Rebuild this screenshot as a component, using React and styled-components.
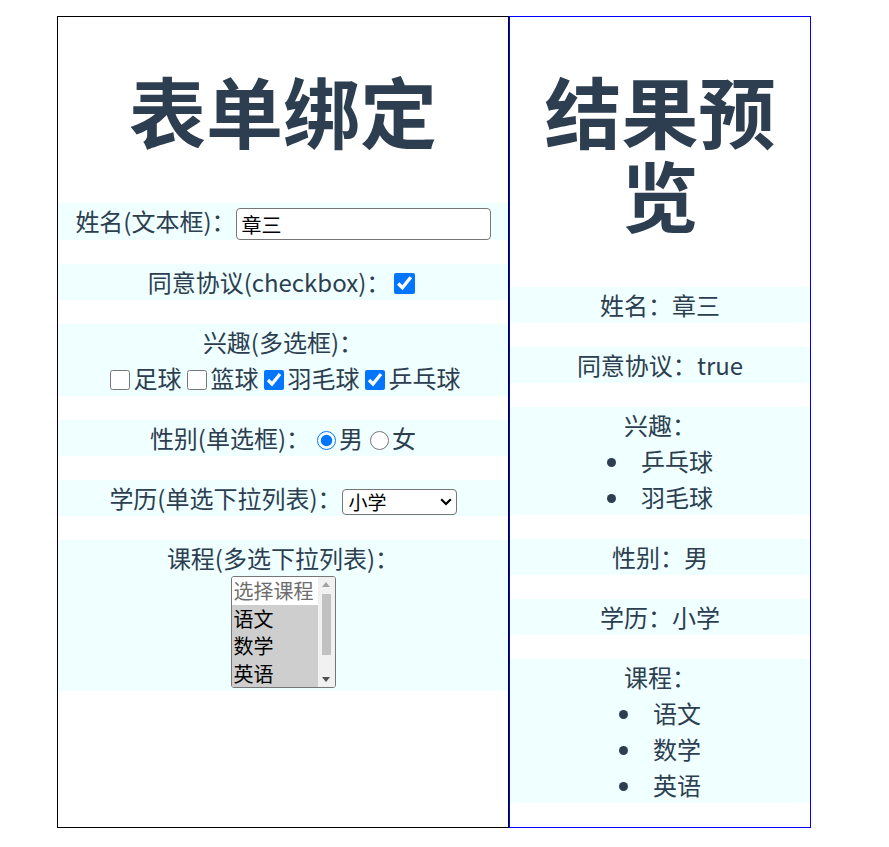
import React, { useState } from "react";
import styled, { createGlobalStyle } from "styled-components";

const GlobalStyle = createGlobalStyle`
  body {
    margin: 0;
    background: #ffffff;
    font-family: "Noto Sans CJK SC", "Noto Sans", sans-serif;
    color: #2c3e50;
  }
`;

const Page = styled.div`
  display: flex;
  align-items: stretch;
  padding: 16px 0 0 57px;
  text-align: center;
`;

const Panel = styled.div`
  box-sizing: border-box;
  width: ${(p) => p.$width}px;
  border: 1px solid ${(p) => p.$border};
`;

const Title = styled.h1`
  margin: 51px 0;
  font-size: 77px;
  line-height: 84px;
  font-weight: 700;
  color: #2c3e50;
`;

const Row = styled.div`
  margin: 24px 0;
  background: #f0ffff;
  font-size: 24px;
  line-height: 36px;
  color: #2c3e50;
`;

const TextInput = styled.input`
  box-sizing: border-box;
  width: 255px;
  height: 32px;
  padding: 1px 5px;
  margin: 0;
  border: 1px solid #767676;
  border-radius: 4px;
  font-family: "Noto Sans CJK SC", sans-serif;
  font-size: 20px;
  color: #000;
  vertical-align: middle;
  outline: none;
`;

const Check = styled.input.attrs({ type: "checkbox" })`
  width: ${(p) => p.$size}px;
  height: ${(p) => p.$size}px;
  margin: 0 ${(p) => p.$right}px 0 ${(p) => p.$left}px;
  vertical-align: -2px;
`;

const Radio = styled.input.attrs({ type: "radio" })`
  width: 19px;
  height: 19px;
  margin: 0 3px 0 7px;
  vertical-align: -2px;
`;

const DropWrap = styled.span`
  position: relative;
  display: inline-block;
  vertical-align: middle;
  line-height: 0;
`;

const Dropdown = styled.select`
  appearance: none;
  box-sizing: border-box;
  width: 115px;
  height: 26px;
  margin: 0;
  padding: 0 0 0 6px;
  border: 1px solid #767676;
  border-radius: 4px;
  background: #fff;
  font-family: "Noto Sans CJK SC", sans-serif;
  font-size: 19px;
  line-height: 24px;
  color: #000;
  outline: none;
`;

const Chevron = styled.svg`
  position: absolute;
  right: 5px;
  top: 9px;
  pointer-events: none;
`;

const ListBox = styled.div`
  display: inline-flex;
  box-sizing: border-box;
  width: 105px;
  height: 112px;
  margin-bottom: 3px;
  border: 1px solid #767676;
  border-radius: 3px;
  background: #fff;
  overflow: hidden;
  vertical-align: top;
  text-align: left;
`;

const Options = styled.div`
  flex: 1;
  display: flex;
  flex-direction: column;
`;

const Option = styled.div`
  height: 27.5px;
  padding: 0 2px;
  font-size: 20px;
  line-height: 27px;
  white-space: nowrap;
  overflow: hidden;
  color: ${(p) => (p.$disabled ? "#6d6d6d" : "#000")};
  background: ${(p) => (p.$selected ? "#cecece" : "#fff")};
  cursor: default;
`;

const ScrollBar = styled.div`
  width: 17px;
  display: flex;
  flex-direction: column;
  align-items: center;
  background: #f1f1f1;
`;

const ScrollButton = styled.div`
  height: 15px;
  width: 100%;
  display: flex;
  align-items: center;
  justify-content: center;
`;

const Track = styled.div`
  flex: 1;
  width: 100%;
  display: flex;
  justify-content: center;
`;

const Thumb = styled.div`
  width: 9px;
  height: 61px;
  margin-top: 2px;
  background: #c1c1c1;
`;

const List = styled.ul`
  margin: 0;
  padding: 0;
  list-style-position: inside;
`;

const courses = ["语文", "数学", "英语"];
const hobbyList = ["足球", "篮球", "羽毛球", "乒乓球"];

export default function App() {
  const [name, setName] = useState("章三");
  const [agree, setAgree] = useState(true);
  const [hobbies, setHobbies] = useState(["乒乓球", "羽毛球"]);
  const [gender, setGender] = useState("男");
  const [edu, setEdu] = useState("小学");
  const [picked, setPicked] = useState(courses);

  const toggleHobby = (h) =>
    setHobbies((list) => (list.includes(h) ? list.filter((x) => x !== h) : [...list, h]));

  const toggleCourse = (c) =>
    setPicked((list) => (list.includes(c) ? list.filter((x) => x !== c) : courses.filter((x) => x === c || list.includes(x))));

  return (
    <>
      <GlobalStyle />
      <Page>
        <Panel $width={452} $border="#000">
          <Title>表单绑定</Title>
          <Row>
            姓名(文本框)：
            <TextInput value={name} onChange={(e) => setName(e.target.value)} />
          </Row>
          <Row>
            同意协议(checkbox)：
            <Check $size={21} $left={4} $right={3} checked={agree} onChange={(e) => setAgree(e.target.checked)} />
          </Row>
          <Row>
            兴趣(多选框)：
            <br />
            {hobbyList.map((h, i) => (
              <React.Fragment key={h}>
                <Check
                  $size={20}
                  $left={i === 0 ? 4 : 5}
                  $right={4}
                  checked={hobbies.includes(h)}
                  onChange={() => toggleHobby(h)}
                />
                {h}
              </React.Fragment>
            ))}
          </Row>
          <Row>
            性别(单选框)：
            <Radio name="gender" checked={gender === "男"} onChange={() => setGender("男")} />男
            <Radio name="gender" checked={gender === "女"} onChange={() => setGender("女")} />女
          </Row>
          <Row>
            学历(单选下拉列表)：
            <DropWrap>
              <Dropdown value={edu} onChange={(e) => setEdu(e.target.value)}>
                <option>小学</option>
                <option>初中</option>
                <option>高中</option>
                <option>大学</option>
              </Dropdown>
              <Chevron width="12" height="8" viewBox="0 0 12 8">
                <path d="M1.2 1.2 L6 6 L10.8 1.2" fill="none" stroke="#000" strokeWidth="2.2" />
              </Chevron>
            </DropWrap>
          </Row>
          <Row>
            课程(多选下拉列表)：
            <br />
            <ListBox>
              <Options>
                <Option $disabled>选择课程</Option>
                {courses.map((c) => (
                  <Option key={c} $selected={picked.includes(c)} onClick={() => toggleCourse(c)}>
                    {c}
                  </Option>
                ))}
              </Options>
              <ScrollBar>
                <ScrollButton>
                  <svg width="8" height="5" viewBox="0 0 8 5">
                    <path d="M0 5 L4 0 L8 5 Z" fill="#a3a3a3" />
                  </svg>
                </ScrollButton>
                <Track>
                  <Thumb />
                </Track>
                <ScrollButton>
                  <svg width="8" height="5" viewBox="0 0 8 5">
                    <path d="M0 0 L4 5 L8 0 Z" fill="#505050" />
                  </svg>
                </ScrollButton>
              </ScrollBar>
            </ListBox>
          </Row>
        </Panel>
        <Panel $width={302} $border="#0000ff">
          <Title>结果预览</Title>
          <Row>姓名：{name}</Row>
          <Row>同意协议：{String(agree)}</Row>
          <Row>
            兴趣：
            <List>
              {["乒乓球", "羽毛球"].filter((h) => hobbies.includes(h)).map((h) => (
                <li key={h}>{h}</li>
              ))}
            </List>
          </Row>
          <Row>性别：{gender}</Row>
          <Row>学历：{edu}</Row>
          <Row>
            课程：
            <List>
              {picked.map((c) => (
                <li key={c}>{c}</li>
              ))}
            </List>
          </Row>
        </Panel>
      </Page>
    </>
  );
}
